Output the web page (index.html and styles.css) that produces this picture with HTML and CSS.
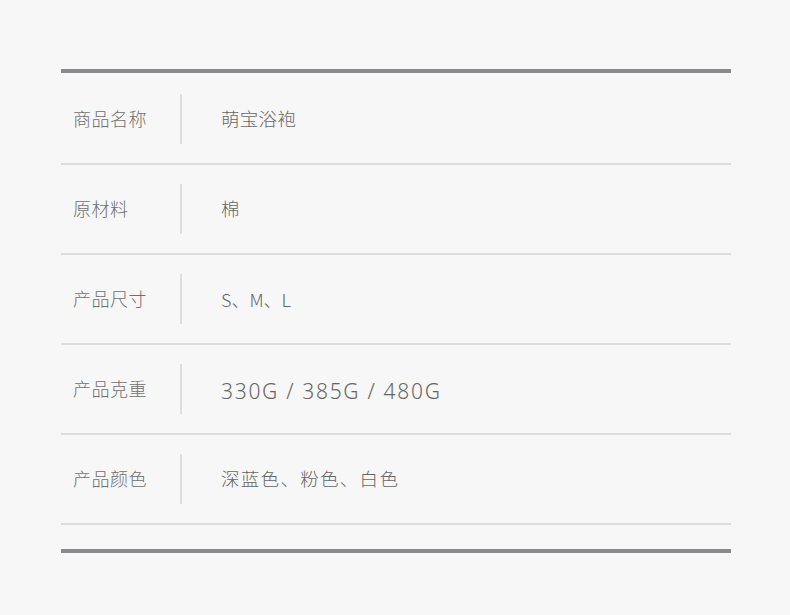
FILE: index.html
```html
<!DOCTYPE html>
<html lang="zh">
<head>
<meta charset="utf-8">
<link rel="stylesheet" href="styles.css">
</head>
<body>
<div class="sheet">
  <div class="bar"></div>
  <div class="rows">
    <div class="row"><div class="label">商品名称</div><div class="sep"></div><div class="value">萌宝浴袍</div></div>
    <div class="row"><div class="label">原材料</div><div class="sep"></div><div class="value">棉</div></div>
    <div class="row"><div class="label">产品尺寸</div><div class="sep"></div><div class="value latin">S、M、L</div></div>
    <div class="row"><div class="label">产品克重</div><div class="sep"></div><div class="value weight">330G / 385G / 480G</div></div>
    <div class="row"><div class="label">产品颜色</div><div class="sep"></div><div class="value wide">深蓝色、粉色、白色</div></div>
  </div>
  <div class="bar bottom"></div>
</div>
</body>
</html>
```
FILE: styles.css
```css
html, body {
  margin: 0;
  padding: 0;
  background: #f7f7f7;
}
body {
  font-family: "Noto Sans CJK SC", "Noto Sans", sans-serif;
  width: 790px;
  height: 615px;
  overflow: hidden;
}
.sheet {
  margin: 69px 0 0 61px;
  width: 670px;
}
.bar {
  height: 4px;
  background: #8a8a8c;
}
.bar.bottom {
  margin-top: 24px;
}
.rows {
  padding-top: 2px;
}
.row {
  height: 88px;
  border-bottom: 2px solid #dddddd;
  display: flex;
  align-items: center;
}
.label {
  width: 107px;
  padding-left: 12px;
  padding-bottom: 3px;
  font-size: 18px;
  font-weight: 300;
  letter-spacing: 0.5px;
  color: #6f6f6f;
  line-height: 1;
}
.sep {
  width: 2px;
  height: 50px;
  background: #dddddd;
}
.value {
  padding-left: 39px;
  padding-bottom: 1px;
  font-size: 18.5px;
  font-weight: 300;
  letter-spacing: 0.3px;
  color: #666666;
  line-height: 1;
}
.value.latin {
  font-size: 18px;
  letter-spacing: 0;
}
.value.weight {
  font-family: "Noto Sans", sans-serif;
  font-size: 21px;
  letter-spacing: 1.7px;
  padding-bottom: 0;
  padding-top: 4px;
}
.value.wide {
  letter-spacing: 1.3px;
}
```
